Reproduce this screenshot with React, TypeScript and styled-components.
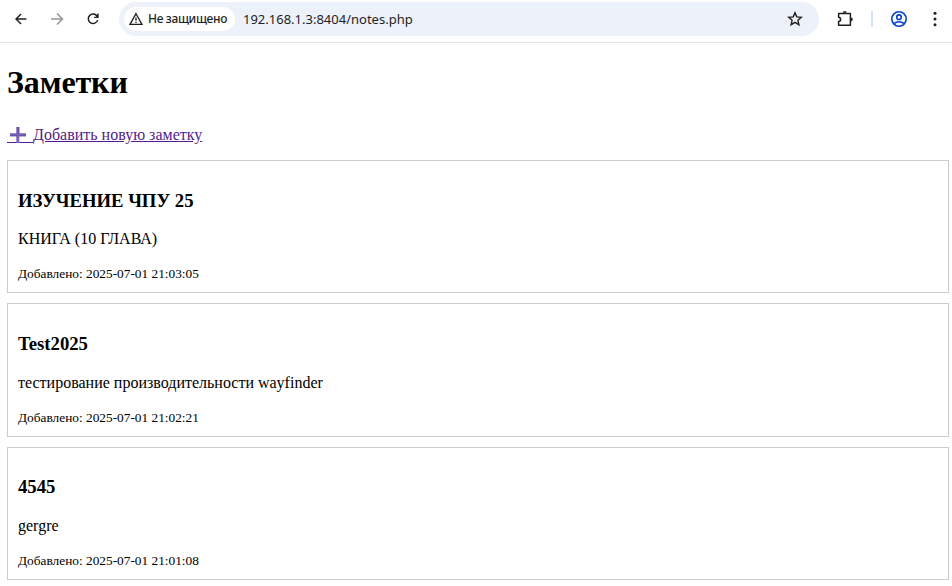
import React from "react";
import styled, { createGlobalStyle } from "styled-components";

const GlobalStyle = createGlobalStyle`
  html, body { margin: 0; background: #fff; }
  body { overflow: hidden; }
  * { box-sizing: border-box; }
`;

const Window = styled.div`
  width: 952px;
  height: 586px;
  overflow: hidden;
  background: #fff;
`;

const Toolbar = styled.header`
  display: flex;
  align-items: flex-start;
  height: 43px;
  padding: 2px 8px 0 12px;
  border-bottom: 1px solid #dfe1e3;
`;

const IconSlot = styled.span<{ $width: number; $color?: string }>`
  display: flex;
  flex: none;
  align-items: center;
  justify-content: center;
  width: ${({ $width }) => $width}px;
  height: 34px;
  color: ${({ $color }) => $color ?? "#1f1f1f"};
  svg { display: block; }
`;

const AddressBar = styled.div`
  display: flex;
  flex: none;
  align-items: center;
  width: 700px;
  height: 34px;
  margin-left: 17px;
  padding: 0 5px;
  border-radius: 17px;
  background: #ecf1fa;
`;

const SecurityChip = styled.div`
  display: flex;
  align-items: center;
  gap: 4px;
  width: 111px;
  height: 24px;
  padding-left: 4px;
  border-radius: 12px;
  background: #fff;
  color: #1f1f1f;
  font: 500 12px/24px "Noto Sans", "Open Sans", sans-serif;
  white-space: nowrap;
  svg { flex: none; }
`;

const ChipLabel = styled.span`
  width: 79px;
  letter-spacing: -0.33px;
`;

const Url = styled.span`
  flex: 1;
  margin-left: 8px;
  color: #1f1f1f;
  font: 13px/34px "Noto Sans", "Open Sans", sans-serif;
`;

const Divider = styled.span`
  flex: none;
  width: 2px;
  height: 16px;
  margin-top: 9px;
  background: #d3e3fd;
`;

const Page = styled.main`
  padding: 21px 3px 0 7px;
  color: #000;
  font: 16px/18px "Liberation Serif", "Times New Roman", serif;
`;

const Title = styled.h1`
  height: 37px;
  margin: 0 0 25px;
  font-size: 32px;
  line-height: 37px;
  letter-spacing: -0.1px;
`;

const AddLink = styled.a`
  display: flex;
  align-items: center;
  width: max-content;
  height: 18px;
  margin-bottom: 16px;
  color: #551a8b;
  text-decoration: underline;
`;

const PlusBox = styled.span`
  display: flex;
  width: 26px;
  height: 16px;
  padding-left: 3px;
  border-bottom: 1px solid #551a8b;
`;

const NoteList = styled.div`
  display: flex;
  flex-direction: column;
  gap: 10px;
`;

const Note = styled.article`
  height: 133.4px;
  padding: 28.6px 10px 0;
  border: 1px solid #ccc;
`;

const NoteTitle = styled.h3`
  margin: 0 0 19.8px;
  font-size: 18.72px;
  line-height: 21px;
`;

const NoteText = styled.p`
  margin: 0 0 17px;
`;

const NoteDate = styled.small`
  display: block;
  font-size: 13.333px;
  line-height: 18px;
`;

const BackIcon = () => (
  <svg width="20" height="20" viewBox="0 0 20 20" fill="none" stroke="currentColor" strokeWidth="1.6">
    <path d="M16 10H5M10 4.5 4.5 10l5.5 5.5" />
  </svg>
);

const ForwardIcon = () => (
  <svg width="20" height="20" viewBox="0 0 20 20" fill="none" stroke="currentColor" strokeWidth="1.5">
    <path d="M4 10h11M10 4.5l5.5 5.5-5.5 5.5" />
  </svg>
);

const ReloadIcon = () => (
  <svg width="20" height="20" viewBox="0 0 20 20" fill="none" stroke="currentColor" strokeWidth="1.6">
    <path d="M14.7 7.1A5.3 5.3 0 1 0 15.2 11.2M15.5 4v4.2h-4.2" />
  </svg>
);

const WarningIcon = () => (
  <svg width="16" height="16" viewBox="0 0 16 16" fill="none" stroke="currentColor" strokeWidth="1.3">
    <path d="M8 2.7 14 13.4H2Z" />
    <path d="M8 6.5v3.3M8 10.8v1.3" />
  </svg>
);

const StarIcon = () => (
  <svg width="18" height="18" viewBox="0 0 18 18" fill="none" stroke="currentColor" strokeWidth="1.4">
    <path d="m9 2.8 1.8 4.1 4.5.4-3.4 3 1 4.4L9 12.4l-3.9 2.3 1-4.4-3.4-3 4.5-.4Z" />
  </svg>
);

const ExtensionsIcon = () => (
  <svg width="20" height="20" viewBox="0 0 20 20">
    <path
      d="M3.6 4.4h11.8v11.8H3.6v-3.8c1.4-.1 2-.9 2-2s-.6-2-2-2.1Z"
      fill="none"
      stroke="currentColor"
      strokeWidth="1.5"
      strokeLinejoin="round"
    />
    <path d="M7.8 3.8a1.9 1.9 0 0 1 3.8 0ZM15.9 8.4a1.9 1.9 0 0 1 0 3.8Z" fill="currentColor" />
  </svg>
);

const ProfileIcon = () => (
  <svg width="20" height="20" viewBox="0 0 20 20" fill="none" stroke="currentColor" strokeWidth="1.6">
    <circle cx="10" cy="10" r="7.2" />
    <circle cx="10" cy="8.2" r="2.3" />
    <path d="M4.9 14.7c3-2.5 7.2-2.5 10.2 0" />
  </svg>
);

const MenuIcon = () => (
  <svg width="20" height="20" viewBox="0 0 20 20" fill="currentColor">
    <circle cx="10" cy="4.2" r="1.5" />
    <circle cx="10" cy="10" r="1.5" />
    <circle cx="10" cy="15.8" r="1.5" />
  </svg>
);

const PlusIcon = () => (
  <svg width="16" height="16" viewBox="0 0 16 16">
    <defs>
      <linearGradient id="plusFill" x1="0" y1="0" x2="0" y2="1">
        <stop offset="0" stopColor="#6f5aa8" />
        <stop offset="1" stopColor="#8167c8" />
      </linearGradient>
    </defs>
    <path d="M6.3 0h3v6.2H16v3H9.3V16h-3V9.2H0v-3h6.3Z" fill="url(#plusFill)" />
    <path d="M8.8 0v6.6M0 8.8h7M9 8.8h7" stroke="#6049a0" strokeWidth=".8" />
  </svg>
);

const notes = [
  { title: "ИЗУЧЕНИЕ ЧПУ 25", text: "КНИГА (10 ГЛАВА)", date: "2025-07-01 21:03:05" },
  { title: "Test2025", text: "тестирование производительности wayfinder", date: "2025-07-01 21:02:21" },
  { title: "4545", text: "gergre", date: "2025-07-01 21:01:08" },
];

export default function App() {
  return (
    <Window>
      <GlobalStyle />
      <Toolbar>
        <IconSlot $width={18}><BackIcon /></IconSlot>
        <IconSlot $width={54} $color="#949494"><ForwardIcon /></IconSlot>
        <IconSlot $width={18}><ReloadIcon /></IconSlot>
        <AddressBar>
          <SecurityChip>
            <WarningIcon />
            <ChipLabel>Не защищено</ChipLabel>
          </SecurityChip>
          <Url>192.168.1.3:8404/notes.php</Url>
          <IconSlot $width={38}><StarIcon /></IconSlot>
        </AddressBar>
        <IconSlot $width={52}><ExtensionsIcon /></IconSlot>
        <Divider />
        <IconSlot $width={52} $color="#0b41c8"><ProfileIcon /></IconSlot>
        <IconSlot $width={20}><MenuIcon /></IconSlot>
      </Toolbar>
      <Page>
        <Title>Заметки</Title>
        <AddLink>
          <PlusBox><PlusIcon /></PlusBox>
          Добавить новую заметку
        </AddLink>
        <NoteList>
          {notes.map((note) => (
            <Note key={note.date}>
              <NoteTitle>{note.title}</NoteTitle>
              <NoteText>{note.text}</NoteText>
              <NoteDate>Добавлено: {note.date}</NoteDate>
            </Note>
          ))}
        </NoteList>
      </Page>
    </Window>
  );
}
